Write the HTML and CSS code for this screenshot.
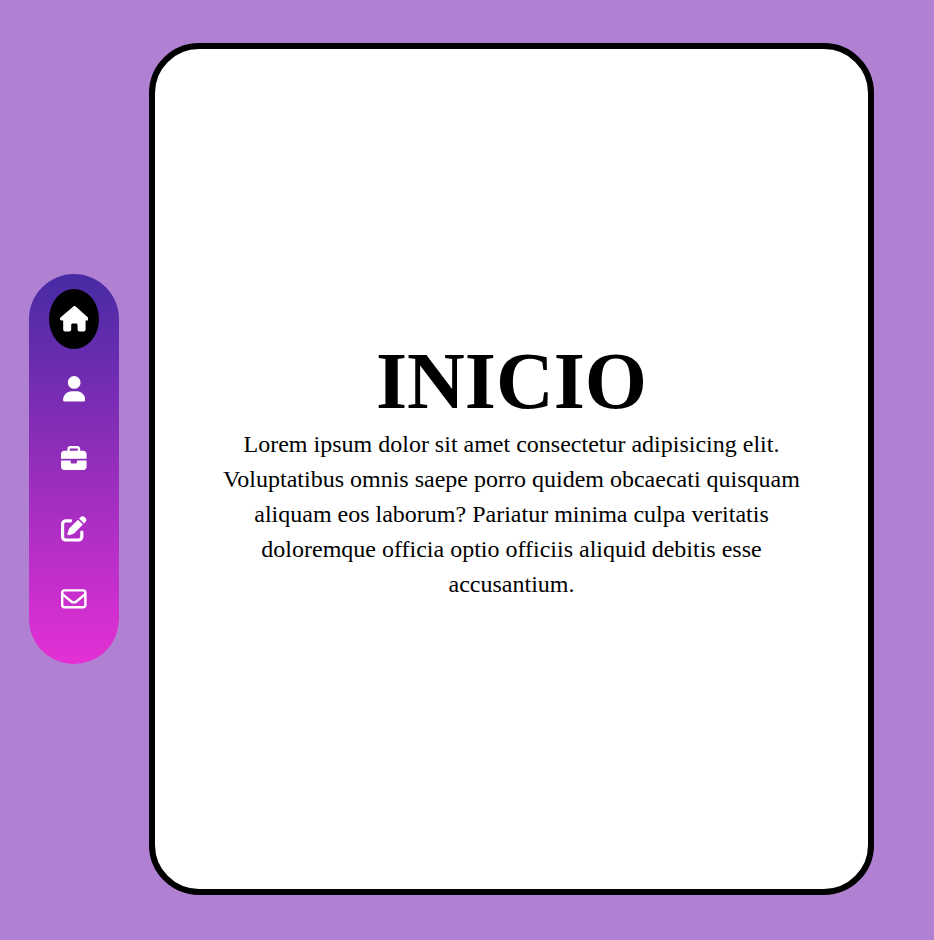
FILE: index.html
```html
<!DOCTYPE html>
<html lang="es">
<head>
<meta charset="utf-8">
<title>Inicio</title>
<link rel="stylesheet" href="styles.css">
</head>
<body>
<nav class="menu">
  <a class="item active"><svg class="icon" viewBox="0 0 576 512"><path d="M575.8 255.5c0 18-15 32.1-32 32.1h-32l.7 160.2c0 2.7-.2 5.4-.5 8.1V472c0 22.1-17.9 40-40 40H456c-1.1 0-2.2 0-3.3-.1c-1.4 .1-2.8 .1-4.2 .1H416 392c-22.1 0-40-17.9-40-40V448 384c0-17.7-14.3-32-32-32H256c-17.7 0-32 14.3-32 32v64 24c0 22.1-17.9 40-40 40H160 128.1c-1.5 0-3-.1-4.5-.2c-1.2 .1-2.4 .2-3.6 .2H104c-22.1 0-40-17.9-40-40V360c0-.9 0-1.9 .1-2.8V287.6H32c-18 0-32-14-32-32.1c0-9 3-17 10-24L266.4 8c7-7 15-8 22-8s15 2 21 7L564.8 231.5c8 7 12 15 11 24z"/></svg></a>
  <a class="item"><svg class="icon" viewBox="0 0 448 512"><path d="M224 256A128 128 0 1 0 224 0a128 128 0 1 0 0 256zm-45.7 48C79.8 304 0 383.8 0 482.3C0 498.7 13.3 512 29.7 512H418.3c16.4 0 29.7-13.3 29.7-29.7C448 383.8 368.2 304 269.7 304H178.3z"/></svg></a>
  <a class="item"><svg class="icon" viewBox="0 0 512 512"><path d="M184 48H328c4.4 0 8 3.6 8 8V96H176V56c0-4.4 3.6-8 8-8zm-56 8V96H64C28.7 96 0 124.7 0 160v96H192 320 512V160c0-35.3-28.7-64-64-64H384V56c0-30.9-25.1-56-56-56H184c-30.9 0-56 25.1-56 56zM512 288H320v32c0 17.7-14.3 32-32 32H224c-17.7 0-32-14.3-32-32V288H0V416c0 35.3 28.7 64 64 64H448c35.3 0 64-28.7 64-64V288z"/></svg></a>
  <a class="item"><svg class="icon" viewBox="0 0 512 512"><path d="M471.6 21.7c-21.9-21.9-57.3-21.9-79.2 0L362.3 51.7l97.9 97.9 30.1-30.1c21.9-21.9 21.9-57.3 0-79.2L471.6 21.7zm-299.2 220c-6.1 6.1-10.8 13.6-13.5 21.9l-29.6 88.8c-2.9 8.6-.6 18.1 5.8 24.6s15.9 8.7 24.6 5.8l88.8-29.6c8.2-2.7 15.7-7.4 21.9-13.5L437.7 172.3 339.7 74.3 172.4 241.7zM96 64C43 64 0 107 0 160V416c0 53 43 96 96 96H352c53 0 96-43 96-96V320c0-17.7-14.3-32-32-32s-32 14.3-32 32v96c0 17.7-14.3 32-32 32H96c-17.7 0-32-14.3-32-32V160c0-17.7 14.3-32 32-32h96c17.7 0 32-14.3 32-32s-14.3-32-32-32H96z"/></svg></a>
  <a class="item"><svg class="icon" viewBox="0 0 512 512"><path d="M64 112c-8.8 0-16 7.2-16 16v22.1L220.5 291.7c20.7 17 50.4 17 71.1 0L464 150.1V128c0-8.8-7.2-16-16-16H64zM48 212.2V384c0 8.8 7.2 16 16 16H448c8.8 0 16-7.2 16-16V212.2L322 328.8c-38.4 31.5-93.7 31.5-132 0L48 212.2zM0 128C0 92.7 28.7 64 64 64H448c35.3 0 64 28.7 64 64V384c0 35.3-28.7 64-64 64H64c-35.3 0-64-28.7-64-64V128z"/></svg></a>
</nav>
<main class="panel">
  <h1 class="title">INICIO</h1>
  <p class="text">Lorem ipsum dolor sit amet consectetur adipisicing elit. Voluptatibus omnis saepe porro quidem obcaecati quisquam aliquam eos laborum? Pariatur minima culpa veritatis doloremque officia optio officiis aliquid debitis esse accusantium.</p>
</main>
</body>
</html>
```
FILE: styles.css
```css
* {
  box-sizing: border-box;
  margin: 0;
  padding: 0;
}

body {
  display: flex;
  align-items: center;
  gap: 30px;
  height: 940px;
  padding: 0 60px 2px 29px;
  background: #b080d2;
  font-family: "Liberation Serif", "Times New Roman", serif;
  color: #000;
}

.menu {
  display: flex;
  flex-direction: column;
  flex: none;
  gap: 10px;
  width: 90px;
  height: 390px;
  padding: 15px 20px;
  border-radius: 45px;
  background: linear-gradient(#472ba4, #e430d5);
}

.item {
  display: flex;
  align-items: center;
  justify-content: center;
  width: 50px;
  height: 60px;
  border-radius: 50%;
}

.active {
  background: #000;
}

.icon {
  height: 25.6px;
  fill: #fff;
}

.panel {
  display: flex;
  flex-direction: column;
  align-items: center;
  justify-content: center;
  flex: 1;
  height: 852px;
  padding: 0 60px 2px;
  border: 6px solid #000;
  border-radius: 50px;
  background: #fff;
  text-align: center;
}

.title {
  font-size: 80px;
  line-height: 92px;
}

.text {
  font-size: 24px;
  line-height: 35px;
}
```
